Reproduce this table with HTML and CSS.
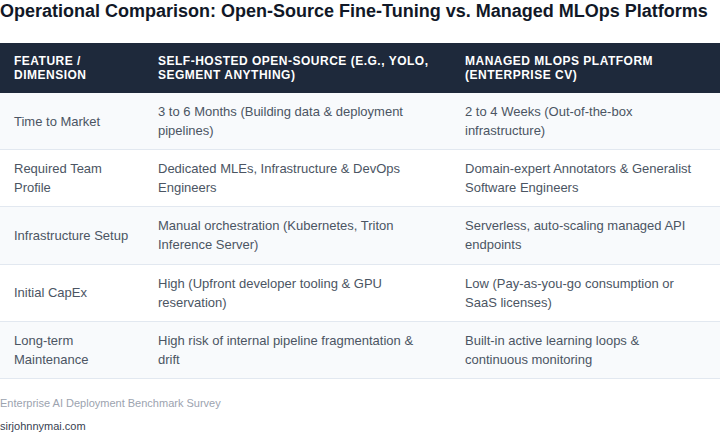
FILE: index.html
```html
<!DOCTYPE html>
<html>
<head>
<meta charset="utf-8">
<link rel="stylesheet" href="styles.css">
</head>
<body>
<h1 class="title">Operational Comparison: Open-Source Fine-Tuning vs. Managed MLOps Platforms</h1>
<table class="cmp">
  <thead>
    <tr>
      <th class="c1">Feature / Dimension</th>
      <th class="c2">Self-Hosted Open-Source (e.g., YOLO, Segment Anything)</th>
      <th class="c3">Managed MLOps Platform (Enterprise CV)</th>
    </tr>
  </thead>
  <tbody>
    <tr>
      <td>Time to Market</td>
      <td>3 to 6 Months (Building data &amp; deployment pipelines)</td>
      <td>2 to 4 Weeks (Out-of-the-box infrastructure)</td>
    </tr>
    <tr>
      <td>Required Team Profile</td>
      <td>Dedicated MLEs, Infrastructure &amp; DevOps Engineers</td>
      <td>Domain-expert Annotators &amp; Generalist Software Engineers</td>
    </tr>
    <tr>
      <td>Infrastructure Setup</td>
      <td>Manual orchestration (Kubernetes, Triton Inference Server)</td>
      <td>Serverless, auto-scaling managed API endpoints</td>
    </tr>
    <tr>
      <td>Initial CapEx</td>
      <td>High (Upfront developer tooling &amp; GPU reservation)</td>
      <td>Low (Pay-as-you-go consumption or SaaS licenses)</td>
    </tr>
    <tr>
      <td>Long-term Maintenance</td>
      <td>High risk of internal pipeline fragmentation &amp; drift</td>
      <td>Built-in active learning loops &amp; continuous monitoring</td>
    </tr>
  </tbody>
</table>
<p class="source">Enterprise AI Deployment Benchmark Survey</p>
<p class="site">sirjohnnymai.com</p>
</body>
</html>
```
FILE: styles.css
```css
html, body {
  margin: 0;
  padding: 0;
  background: #ffffff;
  font-family: "Liberation Sans", Arial, sans-serif;
}
.title {
  margin: 0 0 20px 0;
  font-size: 18px;
  line-height: 23px;
  font-weight: bold;
  color: #111827;
  white-space: nowrap;
}
.cmp {
  width: 720px;
  border-collapse: collapse;
  table-layout: fixed;
}
.cmp th {
  background: #1e293b;
  color: #ffffff;
  text-transform: uppercase;
  font-size: 12px;
  line-height: 14px;
  font-weight: bold;
  letter-spacing: 0.5px;
  text-align: left;
  vertical-align: middle;
  padding: 11px 14px;
}
.c1 { width: 116px; }
.c2 { width: 279px; }
.c3 { width: auto; }
.cmp td {
  font-size: 13px;
  line-height: 19px;
  color: #4b5563;
  padding: 9.1px 14px;
  vertical-align: middle;
  border-bottom: 1px solid #e2e8f0;
}
.cmp td:last-child { padding-right: 18px; }
.cmp tbody tr:nth-child(odd) td { background: #f8fafc; }
.cmp tbody tr:nth-child(even) td { background: #ffffff; }
.source {
  margin: 17px 0 0 0;
  font-size: 11px;
  line-height: 14px;
  color: #9ca3af;
}
.site {
  margin: 9px 0 0 0;
  font-size: 11px;
  line-height: 14px;
  color: #374151;
}
```
